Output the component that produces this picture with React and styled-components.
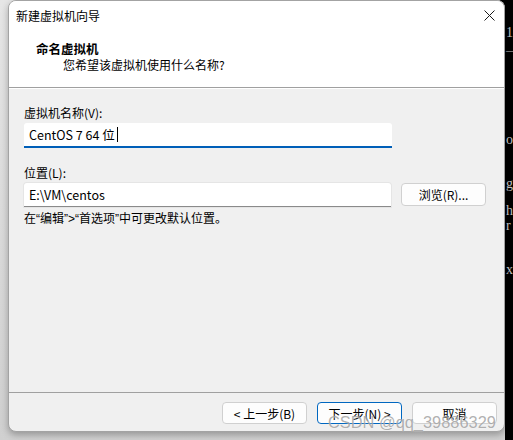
import React from "react";
import styled, { createGlobalStyle } from "styled-components";

const GlobalStyle = createGlobalStyle`
  html, body {
    margin: 0;
    padding: 0;
  }
  body {
    width: 513px;
    height: 440px;
    overflow: hidden;
    background: #000;
    font-family: "Noto Sans CJK SC", "Noto Sans", sans-serif;
    font-size: 12px;
    color: #000;
  }
`;

const terminalBits = [
  { ch: "1", gap: 26 },
  { ch: "—", gap: 4 },
  { ch: "o", gap: 75 },
  { ch: "g", gap: 30 },
  { ch: "h", gap: 13 },
  { ch: "r", gap: 1 },
  { ch: "x", gap: 30 },
];

const App = () => {
  return (
    <Desktop>
      <GlobalStyle />
      <Backdrop>
        <Window>
          <TitleBar>
            <span>新建虚拟机向导</span>
            <CloseButton>
              <svg width="11" height="11" viewBox="0 0 11 11">
                <path d="M0.5 0.5 L10.5 10.5 M10.5 0.5 L0.5 10.5" stroke="#1a1a1a" strokeWidth="1" />
              </svg>
            </CloseButton>
          </TitleBar>

          <Header>
            <HeaderTitle>命名虚拟机</HeaderTitle>
            <HeaderSub>您希望该虚拟机使用什么名称?</HeaderSub>
          </Header>

          <Body>
            <FieldLabel>虚拟机名称(V):</FieldLabel>
            <TextBox $focused $width={368}>
              CentOS 7 64 位<Caret />
            </TextBox>

            <FieldLabel $top={17}>位置(L):</FieldLabel>
            <FieldRow>
              <TextBox $width={367}>E:\VM\centos</TextBox>
              <BrowseButton>浏览(R)...</BrowseButton>
            </FieldRow>
            <Hint>
              在<Quote>“</Quote>编辑<Quote>”&gt;“</Quote>首选项<Quote>”</Quote>中可更改默认位置。
            </Hint>
          </Body>

          <Footer>
            <Button>&lt; 上一步(B)</Button>
            <Button $primary>下一步(N) &gt;</Button>
            <Button>取消</Button>
          </Footer>
        </Window>
      </Backdrop>

      <Terminal>
        {terminalBits.map((b, i) => (
          <TermLine key={i} $gap={b.gap}>
            {b.ch}
          </TermLine>
        ))}
      </Terminal>

      <Watermark>CSDN @qq_39886329</Watermark>
    </Desktop>
  );
};

export default App;

const Desktop = styled.div`
  position: relative;
  display: flex;
  width: 513px;
  height: 440px;
  background: #000;
`;

const Backdrop = styled.div`
  width: 505px;
  height: 440px;
  box-sizing: border-box;
  padding-left: 8px;
  background: linear-gradient(to bottom, #e6e6e6, #d0d0d0);
  border-top-right-radius: 8px;
`;

const Window = styled.div`
  width: 497px;
  height: 432px;
  box-sizing: border-box;
  display: flex;
  flex-direction: column;
  border: 1px solid #a3a3a3;
  border-radius: 8px;
  background: #f0f0f0;
  overflow: hidden;
  box-shadow: 0 3px 7px rgba(0, 0, 0, 0.28);
`;

const TitleBar = styled.div`
  display: flex;
  align-items: center;
  justify-content: space-between;
  height: 29px;
  padding: 0 9px 0 7px;
  background: #fff;
  line-height: 16px;
`;

const CloseButton = styled.div`
  display: flex;
  align-items: center;
  justify-content: center;
  width: 11px;
  height: 11px;
`;

const Header = styled.div`
  height: 58px;
  box-sizing: border-box;
  padding: 11px 0 0 27px;
  background: #fff;
  border-bottom: 1px solid #a0a0a0;
`;

const HeaderTitle = styled.div`
  font-weight: 700;
  font-size: 12.5px;
  line-height: 16px;
`;

const HeaderSub = styled.div`
  padding-left: 27px;
  line-height: 16px;
`;

const Body = styled.div`
  flex: 1;
  padding: 16px 15px 0 15px;
  border-top: 1px solid #fff;
`;

const FieldLabel = styled.div`
  margin-top: ${(p) => p.$top || 0}px;
  margin-bottom: 2px;
  line-height: 16px;
`;

const TextBox = styled.div`
  display: flex;
  align-items: center;
  box-sizing: border-box;
  width: ${(p) => p.$width}px;
  height: ${(p) => (p.$focused ? 25 : 24)}px;
  padding: 0 0 0 5px;
  background: #fff;
  border-radius: 3px 3px 0 0;
  border-bottom: ${(p) => (p.$focused ? "2px solid #005fb8" : "1px solid #8a8a8a")};
  box-shadow: 0 0 0 1px ${(p) => (p.$focused ? "transparent" : "#e5e5e5")};
  font-size: 12.5px;
  white-space: pre;
`;

const Caret = styled.span`
  display: inline-block;
  width: 1px;
  height: 15px;
  margin-left: 2px;
  background: #000;
`;

const FieldRow = styled.div`
  display: flex;
  align-items: flex-start;
  gap: 10px;
`;

const BrowseButton = styled.div`
  display: flex;
  align-items: center;
  justify-content: center;
  box-sizing: border-box;
  width: 85px;
  height: 23px;
  border: 1px solid #d0d0d0;
  border-radius: 4px;
  background: #fdfdfd;
`;

const Hint = styled.div`
  margin-top: 3px;
  line-height: 16px;
`;

const Quote = styled.span`
  font-family: "Liberation Sans", sans-serif;
`;

const Footer = styled.div`
  display: flex;
  justify-content: flex-end;
  gap: 10px;
  height: 39px;
  box-sizing: border-box;
  padding: 9px 7px 0 0;
  border-top: 1px solid #a0a0a0;
`;

const Button = styled.div`
  display: flex;
  align-items: center;
  justify-content: center;
  box-sizing: border-box;
  width: 85px;
  height: 22px;
  border: 1px solid ${(p) => (p.$primary ? "#0067c0" : "#d0d0d0")};
  border-radius: 4px;
  background: #fdfdfd;
  white-space: pre;
`;

const Terminal = styled.div`
  display: flex;
  flex-direction: column;
  width: 8px;
  overflow: hidden;
  padding-left: 1px;
  font-family: "Liberation Serif", serif;
  font-size: 14px;
  color: #bdbdbd;
`;

const TermLine = styled.div`
  margin-top: ${(p) => p.$gap}px;
  line-height: 14px;
  white-space: pre;
`;

const Watermark = styled.div`
  position: absolute;
  left: 328px;
  top: 412px;
  font-family: "Liberation Sans", Arial, sans-serif;
  font-size: 16.4px;
  line-height: 20px;
  white-space: nowrap;
  color: rgba(110, 110, 110, 0.55);
  text-shadow: 0 0 1px rgba(255, 255, 255, 0.8);
  pointer-events: none;
`;
